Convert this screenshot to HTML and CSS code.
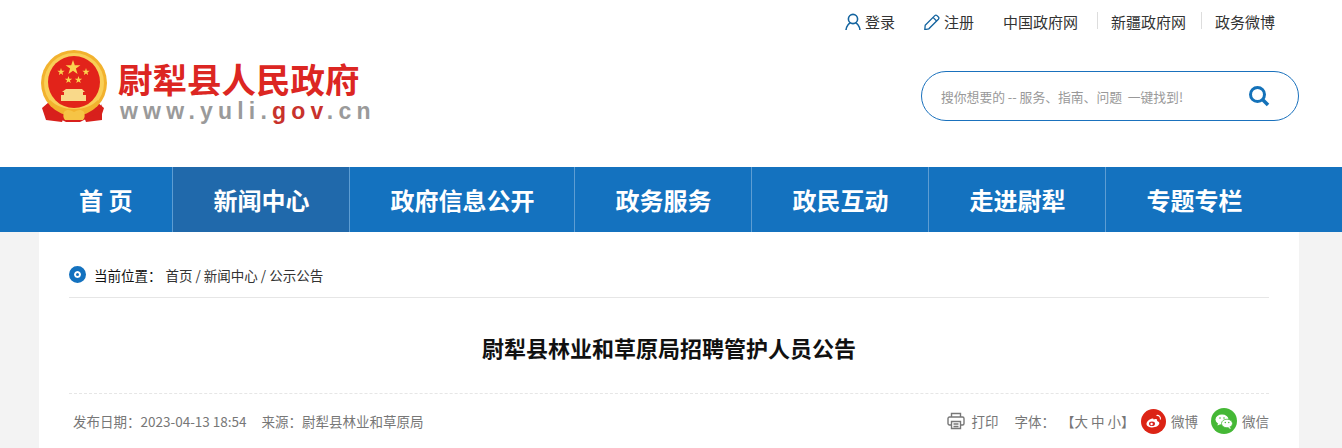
FILE: index.html
```html
<!DOCTYPE html>
<html lang="zh-CN">
<head>
    <meta charset="UTF-8">
    <title>尉犁县林业和草原局招聘管护人员公告</title>
    <link rel="stylesheet" href="styles.css">
</head>
<body>

    <div class="wrap">
        <div class="top-links">
            <a class="top-icon login"><svg width="16" height="18" viewBox="0 0 16 18" fill="none" stroke="#14649f" stroke-width="1.6"><circle cx="8" cy="6" r="4.6"/><path d="M1 17c.4-4 3-6.6 4.4-7M15 17c-.4-4-3-6.6-4.4-7"/></svg>登录</a>
            <a class="top-icon reg"><svg width="16" height="16" viewBox="0 0 16 16" fill="none" stroke="#14649f" stroke-width="1.3"><path d="M1.2 11.2 10.8 1.6a1.6 1.6 0 0 1 2.2 0l1.4 1.4a1.6 1.6 0 0 1 0 2.2L4.8 14.8l-4 .8z"/><path d="M9 3.4 12.6 7"/></svg>注册</a>
            <a class="top-link first">中国政府网</a>
            <a class="top-link sep">新疆政府网</a>
            <a class="top-link sep">政务微博</a>
        </div>
        <div class="logo-row">
            <div class="logo">
                <svg class="emblem" width="70" height="74" viewBox="0 0 70 74">
                    <path d="M9 52 2 58l4 12 12-2 8 4h14l8-4 12 2 4-12-7-6z" fill="#d8201c"/>
                    <circle cx="34" cy="33" r="33" fill="#f2b22e"/>
                    <circle cx="34" cy="33" r="30" fill="#f9cf57"/>
                    <circle cx="34" cy="32" r="26" fill="#e2231a"/>
                    <path id="bigstar" d="m33 10 1.8 5.3h5.6l-4.5 3.3 1.7 5.4-4.6-3.3-4.6 3.3 1.7-5.4-4.5-3.3h5.6z" fill="#fbd34f"/>
                    <path d="m21 18 .9 2.7h2.8l-2.3 1.7.9 2.7-2.3-1.7-2.3 1.7.9-2.7-2.3-1.7h2.8zM46 18l.9 2.7h2.8l-2.3 1.7.9 2.7-2.3-1.7-2.3 1.7.9-2.7-2.3-1.7h2.8zM28.500 26l.9 2.7h2.8l-2.3 1.7.9 2.7-2.3-1.7-2.300 1.700.9-2.700-2.300-1.700h2.800zM38.500 26l.9 2.700h2.800l-2.300 1.700.9 2.700-2.300-1.700-2.300 1.700.9-2.700-2.300-1.700h2.800z" fill="#fbd34f"/>
                    <path d="M26 39h16l3 3h-2v3h3v6H21v-6h3v-3h-2z" fill="#f9d98a"/>
                    <path d="M10 50c6 6 14 9 24 9s18-3 24-9l1 3c-6 7-15 10-25 10S15 60 9 53z" fill="#f2b22e"/>
                    <path d="M6 54c2 6 5 10 10 12l8 1-2 5-16-2zM62 54c-2 6-5 10-10 12l-8 1 2 5 16-2z" fill="#d8201c"/>
                    <path d="M24 62c3-3 6-2 10 0 4-2 7-3 10 0 1 3 1 6-1 8H25c-2-2-2-5-1-8z" fill="#f6c445"/>
                </svg>
                <div class="logo-text">
                    <div class="logo-name">尉犁县人民政府</div>
                    <div class="logo-url">www.yuli.<span>gov</span>.cn</div>
                </div>
            </div>
            <div class="search">
                <span>搜你想要的 -- 服务、指南、问题&nbsp; 一键找到!</span>
                <svg width="22" height="22" viewBox="0 0 22 22" fill="none" stroke="#1472b9"><circle cx="9.500" cy="9.500" r="7" stroke-width="3"/><path d="m14.500 14.500 5.500 5.500" stroke-width="3.600"/></svg>
            </div>
        </div>
    </div>

    <div class="nav">
        <div class="nav-inner">
            <a class="home">首&nbsp;页</a>
            <a class="active">新闻中心</a>
            <a>政府信息公开</a>
            <a>政务服务</a>
            <a>政民互动</a>
            <a>走进尉犁</a>
            <a>专题专栏</a>
        </div>
    </div>

    <div class="main">
        <div class="crumb">
            <span class="dot"></span>
            <b>当前位置：</b>
            <span class="path">首页 / 新闻中心 / 公示公告</span>
        </div>
        <h1>尉犁县林业和草原局招聘管护人员公告</h1>
        <div class="meta">
            <div class="meta-left">
                <span>发布日期：2023-04-13 18:54</span>
                <span>来源：尉犁县林业和草原局</span>
            </div>
            <div class="meta-right">
                <svg width="18" height="18" viewBox="0 0 18 18" fill="none" stroke="#777" stroke-width="1.400"><path d="M4.500 5V1.500h9V5M4 13H2.500A1.500 1.500 0 0 1 1 11.500v-5A1.500 1.500 0 0 1 2.500 5h13A1.500 1.500 0 0 1 17 6.500v5a1.500 1.500 0 0 1-1.500 1.500H14"/><path d="M4.500 9.500h9v7h-9zM6.500 12h5M6.500 14.500h5"/></svg>
                <span class="print">打印</span>
                <span class="size-label">字体：</span>
                <span class="sizes">【大 中 小】</span>
                <span class="share weibo"><svg width="16" height="14" viewBox="0 0 16 14"><path d="M6.500 4.500C3.500 5 .500 7.500.500 10c0 2.200 3 3.500 5.800 3.500 3.700 0 7-2 7-4.200 0-1.500-1.500-2.100-2.300-2.300.5-1.200.3-2.400-1.800-2-1 .2-1.700.6-1.700.6s.3-1.500-1-1.100z" fill="#fff"/><ellipse cx="6" cy="9.800" rx="3" ry="2.300" fill="#d8201c"/><circle cx="5.600" cy="10" r="1.200" fill="#fff"/><path d="M10.500 1.500c2.500-.6 4.500 1.500 3.800 4" fill="none" stroke="#fff" stroke-width="1.100"/></svg></span>
                <span class="share-text">微博</span>
                <span class="share wechat"><svg width="18" height="15" viewBox="0 0 18 15"><ellipse cx="7" cy="5.500" rx="6.500" ry="5" fill="#fff"/><path d="m3 9-.5 2.500L6 10z" fill="#fff"/><ellipse cx="12" cy="9.500" rx="5.500" ry="4.300" fill="#fff" stroke="#45b836" stroke-width=".8"/><path d="m15 13 .8 2-2.800-1.300z" fill="#fff"/><circle cx="5" cy="4" r=".8" fill="#45b836"/><circle cx="9" cy="4" r=".8" fill="#45b836"/><circle cx="10.300" cy="8.500" r=".7" fill="#45b836"/><circle cx="13.800" cy="8.500" r=".7" fill="#45b836"/></svg></span>
                <span class="share-text">微信</span>
            </div>
        </div>
    </div>

</body>
</html>
```

FILE: styles.css
```css
* {
    box-sizing: border-box;
}
html, body {
    margin: 0;
    height: 448px;
    overflow: hidden;
}
body {
    background-color: #f3f3f3;
    font-family: "Noto Sans CJK SC", "Liberation Sans", sans-serif;
    color: #333;
}
.wrap {
    height: 167px;
    padding: 0 43px 0 39px;
    background-color: #fff;
}
.top-links {
    display: flex;
    justify-content: flex-end;
    align-items: center;
    height: 43px;
    font-size: 15px;
    line-height: 20px;
    padding-right: 24px;
}
.top-icon {
    display: flex;
    align-items: center;
    gap: 4px;
}
.login {
    margin-right: 29px;
}
.reg {
    margin-right: 29px;
}
.top-link {
    width: 79px;
    white-space: nowrap;
}
.sep {
    margin-left: 15px;
    padding-left: 14px;
    width: auto;
    position: relative;
}
.sep::before {
    content: "";
    position: absolute;
    left: 0;
    top: 0;
    width: 1px;
    height: 17px;
    background-color: #ddd;
}
.logo-row {
    display: flex;
    justify-content: space-between;
    align-items: flex-start;
}
.logo {
    display: flex;
    margin-top: 7px;
    margin-left: 1px;
}
.emblem {
    flex: none;
}
.logo-text {
    margin-left: 8px;
    margin-top: 10px;
}
.logo-name {
    font-size: 34.500px;
    line-height: 36px;
    font-weight: 700;
    color: #dc2622;
    white-space: nowrap;
}
.logo-url {
    font-family: "Liberation Sans", sans-serif;
    font-size: 23px;
    line-height: 26px;
    font-weight: 700;
    letter-spacing: 5.200px;
    color: #9a9a9a;
    margin-left: 2px;
    margin-top: 2px;
}
.logo-url span {
    color: #c8322c;
}
.search {
    display: flex;
    justify-content: space-between;
    align-items: center;
    width: 378px;
    height: 50px;
    margin-top: 28px;
    padding: 0 28px 0 19px;
    border: 1px solid #1a71bd;
    border-radius: 25px;
    font-size: 12.800px;
    color: #999;
}
.nav {
    height: 65px;
    background-color: #1472bf;
}
.nav-inner {
    display: flex;
    padding-left: 39px;
    height: 65px;
}
.nav a {
    padding: 0 40px;
    border-right: 1px solid #5d9dd3;
    font-size: 24px;
    line-height: 66px;
    font-weight: 700;
    color: #fff;
    white-space: nowrap;
}
.nav a:last-child {
    border-right: none;
}
.nav .active {
    background-color: #2069ab;
}
.main {
    height: 216px;
    width: 1260px;
    margin-left: 39px;
    padding: 0 30px;
    background-color: #fff;
}
.crumb {
    display: flex;
    align-items: center;
    height: 66px;
    font-size: 13.500px;
    border-bottom: 1px solid #e6e6e6;
    padding-top: 20px;
}
.dot {
    width: 17px;
    height: 17px;
    margin-right: 8px;
    border: 5px solid #1472bf;
    border-radius: 50%;
    background-color: #1472bf;
    box-shadow: inset 0 0 0 2px #fff;
    outline: 0;
}
.crumb b {
    font-weight: 400;
    color: #111;
    margin-right: 4px;
}
.path {
    color: #333;
}
h1 {
    margin: 0;
    height: 96px;
    font-size: 22px;
    line-height: 98px;
    font-weight: 700;
    color: #111;
    text-align: center;
    border-bottom: 1px dashed #e6e6e6;
}
.meta {
    display: flex;
    justify-content: space-between;
    align-items: center;
    height: 54px;
    font-size: 13.500px;
    color: #777;
}
.meta-left {
    display: flex;
    gap: 15px;
    padding-left: 4px;
}
.meta-right {
    display: flex;
    align-items: center;
}
.print {
    margin-left: 7px;
}
.size-label {
    margin-left: 16px;
}
.sizes {
    margin-left: 6px;
    width: 80px;
    white-space: nowrap;
}
.share {
    display: flex;
    justify-content: center;
    align-items: center;
    width: 25px;
    height: 25px;
    margin: 0 5px 0 0;
    border-radius: 50%;
}
.weibo {
    background-color: #dc2415;
}
.wechat {
    background-color: #45b836;
    margin-left: 13px;
    width: 26px;
    height: 26px;
}
```
